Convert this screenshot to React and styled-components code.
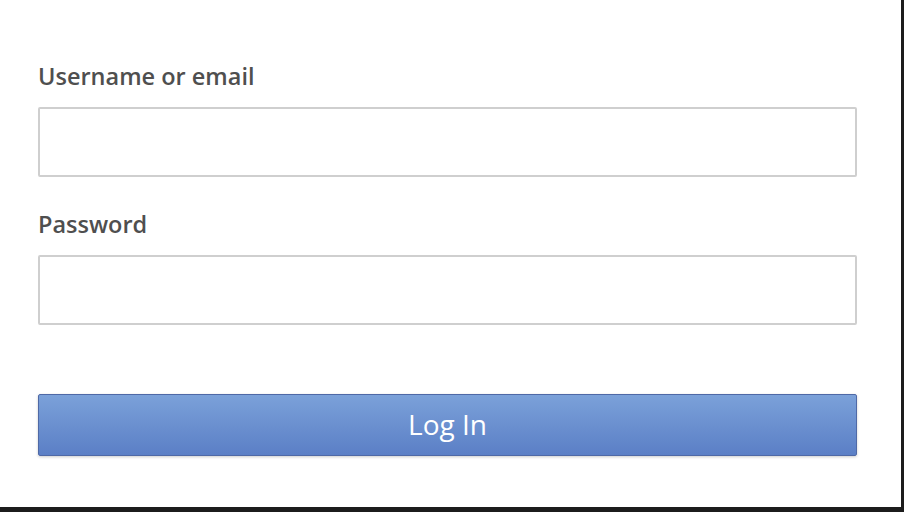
import React from 'react'
import styled, { createGlobalStyle } from 'styled-components';

const GlobalStyle = createGlobalStyle`
  body {
    margin: 0;
    background: #ffffff;
    font-family: "Open Sans", "Liberation Sans", sans-serif;
  }
`;

const Frame = styled.div`
  box-sizing: border-box;
  width: 904px;
  height: 512px;
  background: #ffffff;
  border-right: 3px solid #1c1c1c;
  border-bottom: 5px solid #1c1c1c;
  padding: 61px 44px 0 38px;
`;

const Form = styled.form`
  display: flex;
  flex-direction: column;
`;

const Label = styled.label`
  display: block;
  font-size: 23.5px;
  line-height: 30px;
  font-weight: 600;
  color: #4f4f4f;
  margin: ${(p) => (p.$first ? '0' : '32px')} 0 16px;
`;

const Input = styled.input`
  box-sizing: border-box;
  width: 100%;
  height: 70px;
  border: 2px solid #cfcfcf;
  border-radius: 2px;
  background: #ffffff;
  outline: none;
  font-family: inherit;
  font-size: 20px;
  padding: 0 14px;
`;

const Button = styled.button`
  box-sizing: border-box;
  width: 100%;
  height: 62px;
  margin-top: 69px;
  padding: 0 0 3px;
  border: 1px solid #4f69a6;
  border-radius: 2px;
  background: linear-gradient(#7ba1d9, #5b7fc6);
  box-shadow: 0 1px 3px rgba(0, 0, 0, 0.2);
  color: #ffffff;
  font-family: inherit;
  font-size: 28px;
  font-weight: 400;
  cursor: pointer;
`;

export default function App() {
  return (
    <>
      <GlobalStyle />
      <Frame>
        <Form onSubmit={(e) => e.preventDefault()}>
          <Label $first htmlFor="username">Username or email</Label>
          <Input id="username" type="text" />
          <Label htmlFor="password">Password</Label>
          <Input id="password" type="password" />
          <Button type="submit">Log In</Button>
        </Form>
      </Frame>
    </>
  )
}
